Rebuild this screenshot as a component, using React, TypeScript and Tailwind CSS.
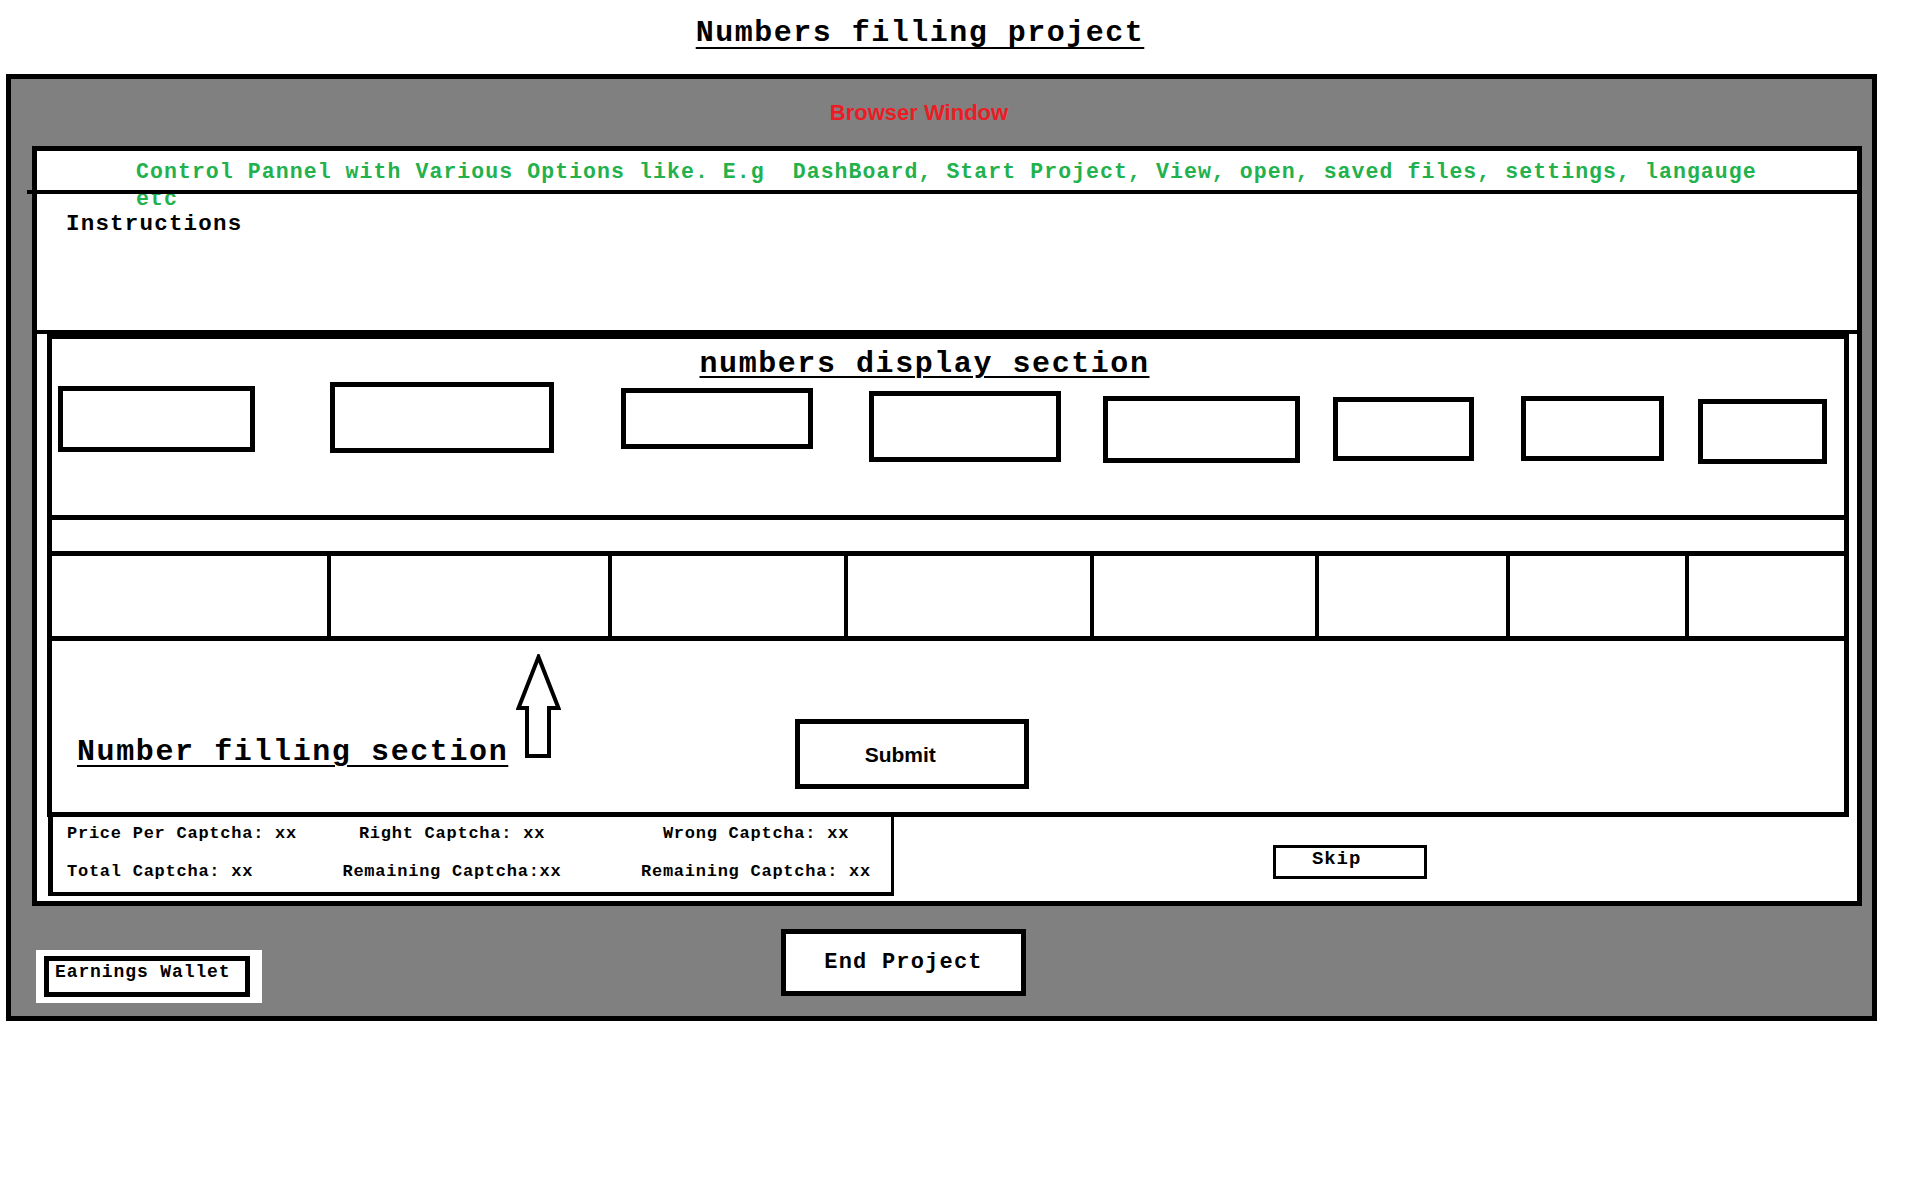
export default function App() {
  const boxes = [
    { ml: "ml-[6px]", mt: "mt-[6px]", w: "w-[197px]", h: "h-[66px]" },
    { ml: "ml-[75px]", mt: "mt-[2px]", w: "w-[224px]", h: "h-[71px]" },
    { ml: "ml-[67px]", mt: "mt-[8px]", w: "w-[192px]", h: "h-[61px]" },
    { ml: "ml-[56px]", mt: "mt-[11px]", w: "w-[192px]", h: "h-[71px]" },
    { ml: "ml-[42px]", mt: "mt-[16px]", w: "w-[197px]", h: "h-[67px]" },
    { ml: "ml-[33px]", mt: "mt-[17px]", w: "w-[141px]", h: "h-[64px]" },
    { ml: "ml-[47px]", mt: "mt-[16px]", w: "w-[143px]", h: "h-[65px]" },
    { ml: "ml-[34px]", mt: "mt-[19px]", w: "w-[129px]", h: "h-[65px]" },
  ];
  const cells = ["w-[279px]", "w-[281px]", "w-[236px]", "w-[246px]", "w-[225px]", "w-[191px]", "w-[179px]"];

  return (
    <div className="w-[1914px] h-[1187px] bg-white text-black font-['Liberation_Mono',monospace] font-bold">
      {/* Title */}
      <div className="h-[74px] flex justify-center pr-[74px]">
        <span className="mt-[16px] h-fit text-[30px] leading-[34px] tracking-[1.5px] underline decoration-2 underline-offset-[6px]">
          Numbers filling project
        </span>
      </div>

      {/* Browser frame */}
      <div className="ml-[6px] w-[1871px] h-[947px] border-[5px] border-black bg-[#808080] flex flex-col">
        <div className="h-[67px] flex items-center justify-center pr-[45px]">
          <span className="font-['Liberation_Sans',Arial,sans-serif] font-bold text-[22px] leading-[22px] text-[#ed1c24]">
            Browser Window
          </span>
        </div>

        {/* Inner panel */}
        <div className="ml-[21px] w-[1830px] h-[760px] border-[5px] border-black bg-white flex flex-col">
          {/* Control panel row */}
          <div className="relative h-[43px] shrink-0">
            <div className="pl-[99px] pt-[8px] text-[#22b14c] text-[21.5px] leading-[27px] tracking-[1.07px] whitespace-pre">
              {"Control Pannel with Various Options like. E.g  DashBoard, Start Project, View, open, saved files, settings, langauge"}
              <br />
              {"etc"}
            </div>
            <div className="absolute left-[-10px] right-0 bottom-0 h-[4px] bg-black" />
          </div>

          {/* Instructions */}
          <div className="h-[140px] shrink-0 border-b-[4px] border-black pl-[29px] pt-[17px]">
            <div className="text-[22.5px] leading-[27px] tracking-[1.2px]">Instructions</div>
          </div>

          {/* Numbers section */}
          <div className="ml-[10px] w-[1802px] h-[483px] shrink-0 border-[5px] border-black flex flex-col">
            <div className="h-[181px] shrink-0 border-b-[5px] border-black flex flex-col">
              <div className="pt-[9px] flex justify-center pr-[47px]">
                <span className="text-[30px] leading-[32px] tracking-[1.56px] underline decoration-2 underline-offset-[4px]">
                  numbers display section
                </span>
              </div>
              <div className="flex items-start">
                {boxes.map((b, i) => (
                  <div key={i} className={`${b.ml} ${b.mt} ${b.w} ${b.h} shrink-0 border-[5px] border-black`} />
                ))}
              </div>
            </div>
            <div className="h-[36px] shrink-0 border-b-[5px] border-black" />
            <div className="h-[85px] shrink-0 border-b-[5px] border-black flex">
              {cells.map((w, i) => (
                <div key={i} className={`${w} h-full shrink-0 border-r-[4px] border-black`} />
              ))}
              <div className="flex-1 h-full" />
            </div>
            <div className="flex-1 flex items-start">
              <span className="ml-[25px] mt-[95px] text-[30px] leading-[32px] tracking-[1.6px] underline decoration-2 underline-offset-[5px] whitespace-nowrap">
                Number filling section
              </span>
              <svg className="ml-[8px] mt-[13px] shrink-0" width="45" height="105" viewBox="0 0 45 105">
                <polygon
                  points="22.5,3 42.5,54 33,54 33,102 11,102 11,54 2.5,54"
                  fill="white"
                  stroke="black"
                  strokeWidth="4"
                  strokeLinejoin="miter"
                />
              </svg>
              <div className="ml-[234px] mt-[78px] w-[234px] h-[70px] shrink-0 border-[5px] border-black flex items-center justify-center pr-[24px]">
                <span className="font-['Liberation_Sans',Arial,sans-serif] font-bold text-[21px] leading-[21px]">Submit</span>
              </div>
            </div>
          </div>

          {/* Stats + skip */}
          <div className="flex items-start">
            <div className="ml-[11px] w-[846px] h-[79px] shrink-0 border-l-[5px] border-r-[3px] border-b-[4px] border-black pt-[7px] grid grid-cols-[270px_258px_1fr] grid-rows-[20px_20px] gap-y-[18px] text-[17px] leading-[20px] tracking-[0.75px] whitespace-nowrap">
              <div className="pl-[14px]">Price Per Captcha: xx</div>
              <div className="text-center">Right Captcha: xx</div>
              <div className="pl-[40px] text-center">Wrong Captcha: xx</div>
              <div className="pl-[14px]">Total Captcha: xx</div>
              <div className="text-center">Remaining Captcha:xx</div>
              <div className="pl-[40px] text-center">Remaining Captcha: xx</div>
            </div>
            <div className="ml-[379px] mt-[28px] w-[154px] h-[34px] shrink-0 border-[3px] border-black pl-[36px]">
              <span className="text-[19px] leading-[22px] tracking-[0.9px]">Skip</span>
            </div>
          </div>
        </div>

        {/* Bottom area */}
        <div className="flex items-start">
          <div className="ml-[25px] mt-[44px] w-[226px] h-[53px] shrink-0 bg-white pl-[8px] pt-[6px]">
            <div className="w-[206px] h-[41px] border-[5px] border-black pl-[6px]">
              <span className="text-[18px] leading-[22px] tracking-[0.9px] whitespace-nowrap">Earnings Wallet</span>
            </div>
          </div>
          <div className="ml-[519px] mt-[23px] w-[245px] h-[67px] shrink-0 border-[5px] border-black bg-white flex items-center justify-center">
            <span className="text-[22px] leading-[26px] tracking-[1.2px]">End Project</span>
          </div>
        </div>
      </div>
    </div>
  );
}
